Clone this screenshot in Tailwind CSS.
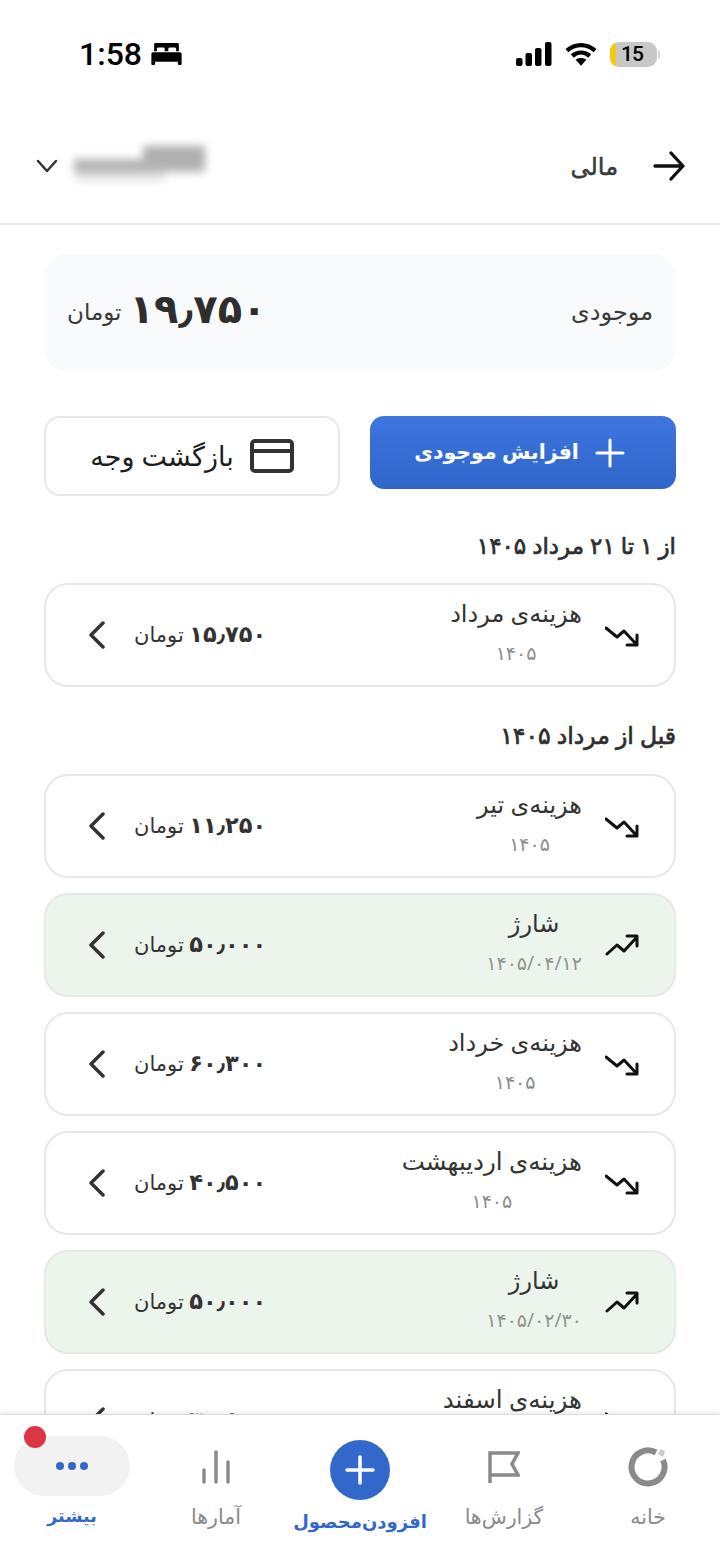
<!DOCTYPE html>
<html lang="fa" dir="rtl">
<head>
<meta charset="utf-8">
<script src="https://cdn.jsdelivr.net/npm/@tailwindcss/browser@4"></script>
</head>
<body class="bg-white">
<div class="w-[720px] h-[1561px] flex flex-col overflow-hidden bg-white text-[#2e2e2e] font-['Noto_Sans','DejaVu_Sans',sans-serif]">

  <!-- status bar -->
  <div dir="ltr" class="h-[100px] shrink-0 flex items-start justify-between pl-[79px] pr-[63px] pt-[36px]">
    <div class="flex items-center gap-[9px] h-[36px]">
      <span class="text-[32px] leading-none font-medium text-black font-['Roboto',sans-serif]">1:58</span>
      <svg width="31" height="22" viewBox="0 0 33 24" fill="#000"><path d="M3 1.5C3 .7 3.7 0 4.5 0h24c.8 0 1.500.7 1.500 1.500V9h-3V6.500c0-.8-.7-1.500-1.500-1.500H20c-.8 0-1.500.7-1.500 1.500V9h-4V6.500c0-.8-.7-1.500-1.500-1.500H7.500C6.700 5 6 5.700 6 6.500V9H3z"/><path d="M2 10h29c1.100 0 2 .9 2 2v8.500H0V12c0-1.100.9-2 2-2z"/><rect x="0" y="20" width="4" height="4" rx="1"/><rect x="29" y="20" width="4" height="4" rx="1"/></svg>
    </div>
    <div class="flex items-center gap-[13px] h-[36px]">
      <svg width="36" height="24" viewBox="0 0 36 24" fill="#000"><rect x="0" y="16" width="6.500" height="8" rx="2"/><rect x="9.500" y="11" width="6.500" height="13" rx="2"/><rect x="19" y="6" width="6.500" height="18" rx="2"/><rect x="29" y="0" width="6.500" height="24" rx="2"/></svg>
      <svg width="32" height="24" viewBox="0 0 33 24" fill="none" stroke="#000" stroke-width="4.500"><path d="M2 8.500c8.500-7.500 20.500-7.500 29 0"/><path d="M7.500 14c5.500-4.500 12.500-4.500 18 0"/><path d="M16.500 24l-5.500-6c3-2.500 8-2.500 11 0z" fill="#000" stroke="none"/></svg>
      <div class="relative">
        <div class="relative w-[47px] h-[25px] rounded-[9px] bg-[#c8c8c8] overflow-hidden flex items-center justify-center pr-[3px]">
          <div class="absolute left-0 top-0 bottom-0 w-[6px] bg-[#f5c910]"></div>
          <span class="relative text-[21px] leading-none font-medium tracking-[-1px] text-black font-['Roboto',sans-serif]">15</span>
        </div>
        <div class="absolute -right-[3px] top-[8px] w-[2px] h-[9px] rounded-r-full bg-[#d4d4d4]"></div>
      </div>
    </div>
  </div>

  <!-- header -->
  <div class="h-[125px] shrink-0 flex items-center justify-between pr-[35px] pl-[35px] pt-[8px] border-b-2 border-[#e9e9e9]">
    <div class="flex items-center gap-[35px]">
      <svg width="32" height="32" viewBox="0 0 32 32" fill="none" stroke="#111" stroke-width="3.300" stroke-linecap="round" stroke-linejoin="round"><path d="M2 16h27M18 3l12 13-12 13"/></svg>
      <span class="text-[24px] leading-none text-[#3a3a3a] [-webkit-text-stroke:0.5px_#3a3a3a]">مالی</span>
    </div>
    <div class="flex items-center gap-[15px]">
      <div class="w-[131px] h-[40px] flex flex-col items-start blur-[4px] opacity-60">
        <div class="h-[13px] w-[62px] bg-[#777]"></div>
        <div class="h-[13px] w-full bg-[#808080]"></div>
        <div class="h-[9px] w-[90px] mr-[40px] bg-[#cfcfcf]"></div>
      </div>
      <svg width="24" height="16" viewBox="0 0 24 16" fill="none" stroke="#333" stroke-width="2.500" stroke-linecap="round" stroke-linejoin="round"><path d="M3 3l9 10 9-10"/></svg>
    </div>
  </div>

  <!-- content -->
  <div class="flex-1 min-h-0 overflow-hidden px-[44px] pt-[29px]">
    <div class="h-[118px] rounded-[24px] bg-[#f8fafb] flex items-center justify-between px-[23px]">
      <span class="text-[24px] -mt-[4px] text-[#3a3a3a]">موجودی</span>
      <div class="flex items-center gap-[8px]">
        <span class="text-[40px] font-bold leading-none -mt-[10px] text-[#2e2e2e]">۱۹٫۷۵۰</span>
        <span class="text-[23px] -mt-[4px] text-[#3a3a3a]">تومان</span>
      </div>
    </div>

    <div class="flex items-start gap-[30px] mt-[44px]">
      <div class="w-[306px] h-[73px] rounded-[14px] bg-gradient-to-b from-[#3e75e0] to-[#2f66c8] flex items-center justify-center gap-[16px] pr-[7px] text-white">
        <svg width="30" height="30" viewBox="0 0 30 30" fill="none" stroke="#fff" stroke-width="3" stroke-linecap="round"><path d="M15 2v26M2 15h26"/></svg>
        <span class="text-[20.5px] -mt-[3px] font-bold">افزایش موجودی</span>
      </div>
      <div class="w-[296px] h-[80px] rounded-[16px] bg-white border-2 border-[#e8e8e8] flex items-center justify-center gap-[16px]">
        <svg width="44" height="34" viewBox="0 0 44 34" fill="none" stroke="#333" stroke-width="4" stroke-linejoin="round"><rect x="2" y="2" width="40" height="30" rx="3"/><path d="M2 12h40"/></svg>
        <span class="text-[27px] text-[#1c1c1c]">بازگشت وجه</span>
      </div>
    </div>

    <h2 class="mt-[30px] h-[38px] text-[23px] leading-[38px] text-[#2e2e2e] [-webkit-text-stroke:0.7px_#2e2e2e]">از ۱ تا ۲۱ مرداد ۱۴۰۵</h2>

    <div class="mt-[19px] flex flex-col">
      <div class="h-[104px] rounded-[24px] border-2 border-[#e8e8e8] bg-white flex items-center justify-between pr-[35px] pl-[42px]">
        <div class="flex items-center gap-[23px]">
          <svg class="mt-[4px]" width="34" height="22" viewBox="0 0 34 22" fill="none" stroke="#111" stroke-width="3" stroke-linecap="round" stroke-linejoin="round"><path d="M1 2l11 9 7-6 13 14M32 9v10H22"/></svg>
          <div class="flex flex-col items-center gap-[8px] pb-[6px]">
            <span class="text-[24px] leading-[34px] text-[#333]">هزینه‌ی مرداد</span>
            <span class="text-[19px] leading-[30px] text-[#8c8c8c]">۱۴۰۵</span>
          </div>
        </div>
        <div class="flex items-center gap-[28px]">
          <span class="text-[21px] -mt-[3px] text-[#333]"><b class="text-[22.5px] font-bold">۱۵٫۷۵۰</b> تومان</span>
          <svg width="18" height="28" viewBox="0 0 18 28" fill="none" stroke="#333" stroke-width="3.500" stroke-linecap="round" stroke-linejoin="round"><path d="M15 2L3 14l12 12"/></svg>
        </div>
      </div>
    </div>

    <h2 class="mt-[29px] h-[38px] text-[23.5px] leading-[38px] text-[#2e2e2e] [-webkit-text-stroke:0.7px_#2e2e2e]">قبل از مرداد ۱۴۰۵</h2>

    <div class="mt-[20px] flex flex-col gap-[15px]">
      <div class="h-[104px] shrink-0 rounded-[24px] border-2 border-[#e8e8e8] bg-white flex items-center justify-between pr-[35px] pl-[42px]">
        <div class="flex items-center gap-[23px]">
          <svg class="mt-[4px]" width="34" height="22" viewBox="0 0 34 22" fill="none" stroke="#111" stroke-width="3" stroke-linecap="round" stroke-linejoin="round"><path d="M1 2l11 9 7-6 13 14M32 9v10H22"/></svg>
          <div class="flex flex-col items-center gap-[8px] pb-[6px]">
            <span class="text-[24px] leading-[34px] text-[#333]">هزینه‌ی تیر</span>
            <span class="text-[19px] leading-[30px] text-[#8c8c8c]">۱۴۰۵</span>
          </div>
        </div>
        <div class="flex items-center gap-[28px]">
          <span class="text-[21px] -mt-[3px] text-[#333]"><b class="text-[22.5px] font-bold">۱۱٫۲۵۰</b> تومان</span>
          <svg width="18" height="28" viewBox="0 0 18 28" fill="none" stroke="#333" stroke-width="3.500" stroke-linecap="round" stroke-linejoin="round"><path d="M15 2L3 14l12 12"/></svg>
        </div>
      </div>

      <div class="h-[104px] shrink-0 rounded-[24px] border-2 border-[#e3e9e3] bg-[#ecf5ec] flex items-center justify-between pr-[35px] pl-[42px]">
        <div class="flex items-center gap-[23px]">
          <svg width="34" height="22" viewBox="0 0 34 22" fill="none" stroke="#111" stroke-width="3" stroke-linecap="round" stroke-linejoin="round"><path d="M2 20l10-9 7 6L32 3M22 2h10v10"/></svg>
          <div class="flex flex-col items-center gap-[8px] pb-[6px]">
            <span class="text-[24px] leading-[34px] text-[#333]">شارژ</span>
            <span class="text-[19px] leading-[30px] text-[#8c948c]">۱۴۰۵/۰۴/۱۲</span>
          </div>
        </div>
        <div class="flex items-center gap-[28px]">
          <span class="text-[21px] -mt-[3px] text-[#333]"><b class="text-[22.5px] font-bold">۵۰٫۰۰۰</b> تومان</span>
          <svg width="18" height="28" viewBox="0 0 18 28" fill="none" stroke="#333" stroke-width="3.500" stroke-linecap="round" stroke-linejoin="round"><path d="M15 2L3 14l12 12"/></svg>
        </div>
      </div>

      <div class="h-[104px] shrink-0 rounded-[24px] border-2 border-[#e8e8e8] bg-white flex items-center justify-between pr-[35px] pl-[42px]">
        <div class="flex items-center gap-[23px]">
          <svg class="mt-[4px]" width="34" height="22" viewBox="0 0 34 22" fill="none" stroke="#111" stroke-width="3" stroke-linecap="round" stroke-linejoin="round"><path d="M1 2l11 9 7-6 13 14M32 9v10H22"/></svg>
          <div class="flex flex-col items-center gap-[8px] pb-[6px]">
            <span class="text-[24px] leading-[34px] text-[#333]">هزینه‌ی خرداد</span>
            <span class="text-[19px] leading-[30px] text-[#8c8c8c]">۱۴۰۵</span>
          </div>
        </div>
        <div class="flex items-center gap-[28px]">
          <span class="text-[21px] -mt-[3px] text-[#333]"><b class="text-[22.5px] font-bold">۶۰٫۳۰۰</b> تومان</span>
          <svg width="18" height="28" viewBox="0 0 18 28" fill="none" stroke="#333" stroke-width="3.500" stroke-linecap="round" stroke-linejoin="round"><path d="M15 2L3 14l12 12"/></svg>
        </div>
      </div>

      <div class="h-[104px] shrink-0 rounded-[24px] border-2 border-[#e8e8e8] bg-white flex items-center justify-between pr-[35px] pl-[42px]">
        <div class="flex items-center gap-[23px]">
          <svg class="mt-[4px]" width="34" height="22" viewBox="0 0 34 22" fill="none" stroke="#111" stroke-width="3" stroke-linecap="round" stroke-linejoin="round"><path d="M1 2l11 9 7-6 13 14M32 9v10H22"/></svg>
          <div class="flex flex-col items-center gap-[8px] pb-[6px]">
            <span class="text-[24.5px] leading-[34px] text-[#333]">هزینه‌ی اردیبهشت</span>
            <span class="text-[19px] leading-[30px] text-[#8c8c8c]">۱۴۰۵</span>
          </div>
        </div>
        <div class="flex items-center gap-[28px]">
          <span class="text-[21px] -mt-[3px] text-[#333]"><b class="text-[22.5px] font-bold">۴۰٫۵۰۰</b> تومان</span>
          <svg width="18" height="28" viewBox="0 0 18 28" fill="none" stroke="#333" stroke-width="3.500" stroke-linecap="round" stroke-linejoin="round"><path d="M15 2L3 14l12 12"/></svg>
        </div>
      </div>

      <div class="h-[104px] shrink-0 rounded-[24px] border-2 border-[#e3e9e3] bg-[#ecf5ec] flex items-center justify-between pr-[35px] pl-[42px]">
        <div class="flex items-center gap-[23px]">
          <svg width="34" height="22" viewBox="0 0 34 22" fill="none" stroke="#111" stroke-width="3" stroke-linecap="round" stroke-linejoin="round"><path d="M2 20l10-9 7 6L32 3M22 2h10v10"/></svg>
          <div class="flex flex-col items-center gap-[8px] pb-[6px]">
            <span class="text-[24px] leading-[34px] text-[#333]">شارژ</span>
            <span class="text-[19px] leading-[30px] text-[#8c948c]">۱۴۰۵/۰۲/۳۰</span>
          </div>
        </div>
        <div class="flex items-center gap-[28px]">
          <span class="text-[21px] -mt-[3px] text-[#333]"><b class="text-[22.5px] font-bold">۵۰٫۰۰۰</b> تومان</span>
          <svg width="18" height="28" viewBox="0 0 18 28" fill="none" stroke="#333" stroke-width="3.500" stroke-linecap="round" stroke-linejoin="round"><path d="M15 2L3 14l12 12"/></svg>
        </div>
      </div>

      <div class="h-[104px] shrink-0 rounded-[24px] border-2 border-[#e8e8e8] bg-white flex items-center justify-between pr-[35px] pl-[42px]">
        <div class="flex items-center gap-[23px]">
          <svg class="mt-[4px]" width="34" height="22" viewBox="0 0 34 22" fill="none" stroke="#111" stroke-width="3" stroke-linecap="round" stroke-linejoin="round"><path d="M1 2l11 9 7-6 13 14M32 9v10H22"/></svg>
          <div class="flex flex-col items-center gap-[8px] pb-[6px]">
            <span class="text-[24.5px] leading-[34px] text-[#333]">هزینه‌ی اسفند</span>
            <span class="text-[19px] leading-[30px] text-[#8c8c8c]">۱۴۰۴</span>
          </div>
        </div>
        <div class="flex items-center gap-[28px]">
          <span class="text-[21px] -mt-[3px] text-[#333]"><b class="text-[22.5px] font-bold">۳۰٫۵۰۰</b> تومان</span>
          <svg width="18" height="28" viewBox="0 0 18 28" fill="none" stroke="#333" stroke-width="3.500" stroke-linecap="round" stroke-linejoin="round"><path d="M15 2L3 14l12 12"/></svg>
        </div>
      </div>
    </div>
  </div>

  <!-- bottom nav -->
  <nav class="relative h-[147px] shrink-0 grid grid-cols-5 bg-white border-t border-[#dcdcdc] shadow-[0_-2px_4px_rgba(0,0,0,0.08)]">
    <div class="flex flex-col items-center pt-[21px]">
      <div class="h-[62px] flex items-center justify-center">
        <svg width="40" height="40" viewBox="0 0 40 40" fill="none"><path d="M28 5.500A16.500 16.500 0 1 0 35 13" stroke="#8a8a8a" stroke-width="6"/><path d="M30 7l3-5 4 3-2 5z" fill="#c9c9c9"/></svg>
      </div>
      <span class="mt-[3px] text-[20.5px] leading-[30px] text-[#8a8a8a]">خانه</span>
    </div>
    <div class="flex flex-col items-center pt-[21px]">
      <div class="h-[62px] flex items-center justify-center">
        <svg width="32" height="32" viewBox="0 0 32 32" fill="none" stroke="#8a8a8a" stroke-width="3.500"><path d="M2 32V2h28l-6 11 6 11H2"/></svg>
      </div>
      <span class="mt-[3px] text-[20.5px] leading-[30px] text-[#8a8a8a]">گزارش‌ها</span>
    </div>
    <div class="flex flex-col items-center pt-[25px]">
      <div class="w-[60px] h-[60px] rounded-full bg-[#3268c9] flex items-center justify-center">
        <svg width="32" height="32" viewBox="0 0 32 32" fill="none" stroke="#fff" stroke-width="3.500" stroke-linecap="round"><path d="M16 3v26M3 16h26"/></svg>
      </div>
      <span class="mt-[6px] text-[18px] leading-[30px] font-bold text-[#3268c9] whitespace-nowrap">افزودن‌محصول</span>
    </div>
    <div class="flex flex-col items-center pt-[21px]">
      <div class="h-[62px] flex items-center justify-center">
        <svg width="30" height="34" viewBox="0 0 30 34" fill="none" stroke="#8a8a8a" stroke-width="3.500" stroke-linecap="round"><path d="M3 20v12M15 2v30M27 12v20"/></svg>
      </div>
      <span class="mt-[3px] text-[20.5px] leading-[30px] text-[#8a8a8a]">آمارها</span>
    </div>
    <div class="relative flex flex-col items-center pt-[21px]">
      <div class="w-[116px] h-[60px] rounded-full bg-[#f2f2f2] flex items-center justify-center gap-[4px]">
        <span class="w-[8px] h-[8px] rounded-full bg-[#3268c9]"></span>
        <span class="w-[8px] h-[8px] rounded-full bg-[#3268c9]"></span>
        <span class="w-[8px] h-[8px] rounded-full bg-[#3268c9]"></span>
      </div>
      <span class="mt-[4px] text-[17.5px] leading-[30px] font-bold text-[#3268c9]">بیشتر</span>
      <span class="absolute left-[24px] top-[11px] w-[22px] h-[22px] rounded-full bg-[#dc3545]"></span>
    </div>
  </nav>
</div>
</body>
</html>
